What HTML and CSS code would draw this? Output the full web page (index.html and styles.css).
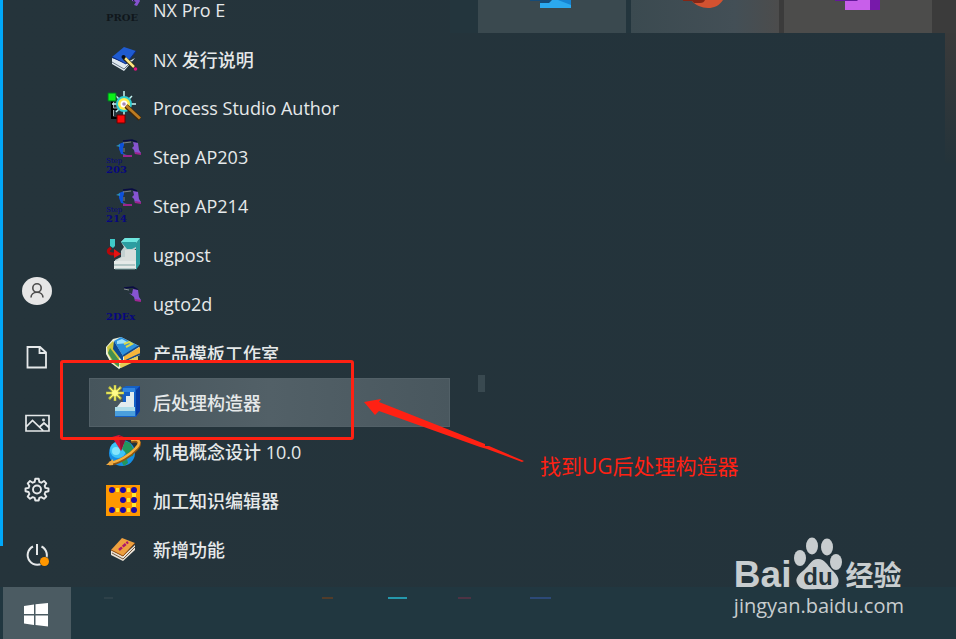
FILE: index.html
```html
<!DOCTYPE html>
<html lang="zh-cmn-Hans">
<head>
    <meta charset="UTF-8">

    <title>开始菜单</title>

    <link rel="stylesheet" href="styles.css">
</head>
<body>
    <div id="start-menu">
        <div class="edge"></div>
        <nav class="rail">
            <button type="button" aria-label="用户">
                <svg width="30" height="30" viewBox="0 0 30 30">
                    <ellipse cx="15" cy="15" rx="15" ry="14" fill="#e6e6e6"/>
                    <g fill="none" stroke="#4c4c4c" stroke-width="1.6">
                        <circle cx="15" cy="12" r="4.2"/>
                        <path d="M9 21.500c0-3 2.500-5.300 6-5.300s6 2.300 6 5.300"/>
                    </g>
                </svg>
            </button>
            <button type="button" aria-label="文档">
                <svg width="30" height="30" viewBox="0 0 30 30" fill="none" stroke="#e6e9ea" stroke-width="1.800">
                    <path d="M5.500 5h12.500l6 5.500v15h-18.500zM17.500 5v6h6.500"/>
                </svg>
            </button>
            <button type="button" aria-label="图片">
                <svg width="30" height="30" viewBox="0 0 30 30" fill="none" stroke="#e6e9ea" stroke-width="1.700">
                    <path d="M4 7.500h23v15.500h-23zM4.500 18.500l6-6 10.500 10M17.500 19l4.500-4 5 4.500"/>
                    <circle cx="21.500" cy="12" r=".6"/>
                </svg>
            </button>
            <button type="button" aria-label="设置">
                <svg width="30" height="30" viewBox="0 0 30 30" fill="none" stroke="#e6e9ea" stroke-width="1.900">
                    <path stroke-linejoin="round" d="M13.300 4.800h3.400l.6 3 2 .9 2.700-1.700 2.300 2.300-1.700 2.600.8 2 3.100.6v2.800l-3.100.7-.8 2 1.700 2.500-2.300 2.300-2.700-1.700-2 .8-.6 2.600h-3.400l-.6-2.600-2-.8-2.700 1.700-2.300-2.300 1.700-2.500-.8-2-3.100-.7v-2.800l3.100-.6.8-2-1.700-2.600 2.300-2.300 2.700 1.700 2-.9z"/>
                    <circle cx="15" cy="15.500" r="4"/>
                </svg>
            </button>
            <button type="button" aria-label="电源">
                <svg width="30" height="30" viewBox="0 0 30 30">
                    <path fill="none" stroke="#e6e9ea" stroke-width="2" d="M15 4v11M11 6.500a9.600 9.600 0 1 0 8.500 0"/>
                    <circle cx="22.500" cy="21.500" r="5" fill="#24333a"/>
                    <circle cx="22.500" cy="21.500" r="4.500" fill="#ff9700"/>
                </svg>
            </button>
        </nav>
        <ul class="apps">
            <li><a href="#">
                <svg viewBox="0 0 36 36">
                    <path d="M27 5h6l2 4-3 5-3-1 2-3-4-1z" fill="#8552cf"/><path d="M28 6l2 4-2-1z" fill="#291947"/>
                    <text class="tag dark" x="1" y="29">PROE</text>
                </svg>
                <span>NX Pro E</span>
            </a></li>
            <li><a href="#">
                <svg viewBox="0 0 36 36">
                    <path d="M7 17v6l12 7 11-13-9 5z" fill="#dfe8ef"/>
                    <path d="M7 21l12 7 8-8" fill="none" stroke="#6b7987"/>
                    <path d="M19 6l12 4-10 13-14-7z" fill="#1f5bd0"/>
                    <path d="M7 16l14 7 10-13" fill="none" stroke="#0b2a85"/>
                    <path d="M19 17l10 9" stroke="#2a2415" stroke-width="4"/><path d="M20 17l9 9" stroke="#ffe680" stroke-width="2.500"/>
                    <circle cx="18.500" cy="16" r="2" fill="#090d18"/><circle cx="30.500" cy="28" r="1.800" fill="#e3117e"/>
                </svg>
                <span>NX 发行说明</span>
            </a></li>
            <li><a href="#">
                <svg viewBox="0 0 36 36">
                    <path d="M7 11v17h6M7 19h6" fill="none" stroke="#000" stroke-width="2"/>
                    <path d="M8.500 12v6h5M8.500 20v6" fill="none" stroke="#a4b0b5"/>
                    <path d="M19 1v26M7 14h24M11 6l16 16M27 6L11 22" stroke="#c7f5f4" stroke-width="1.500"/>
                    <circle cx="19" cy="14" r="8" fill="#2fcdd1"/><circle cx="19" cy="14" r="6" fill="#ffed4d"/>
                    <circle cx="19" cy="14" r="3.500" fill="#fff"/><circle cx="19" cy="14" r="1.800" fill="#a689b4"/>
                    <path d="M21 16l14 13" stroke="#40270b" stroke-width="4.500"/><path d="M21 15.500l14 13" stroke="#bd7c22" stroke-width="2.800"/>
                    <path d="M3 3h8v8H3z" fill="#0bf019" stroke="#072"/><path d="M12 25h8v8h-8z" fill="#fb0909" stroke="#600"/>
                </svg>
                <span>Process Studio Author</span>
            </a></li>
            <li><a href="#">
                <svg viewBox="0 0 36 36">
                    <path d="M14 5l5-2v3l-1 3v5l3 2-5-1-2-5z" fill="#0d51db"/><path d="M11 7l4-2v3z" fill="#2889b9"/>
                    <path d="M18 2l9-1 5 2" fill="none" stroke="#090c45" stroke-width="1.500"/>
                    <path d="M18 4l8-1M18 16l9 1M19 9v4" fill="none" stroke="#7b8088"/>
                    <path d="M28 3l5 1 1 7 2 3-6 1-1-4-2-2 2-2z" fill="#8654d1"/>
                    <path d="M18 17h9M30 14l6 1" stroke="#9c248e" stroke-width="2"/>
                    <text class="tag small" x="1" y="24">Step</text><text class="tag" x="1" y="34">203</text>
                </svg>
                <span>Step AP203</span>
            </a></li>
            <li><a href="#">
                <svg viewBox="0 0 36 36">
                    <path d="M14 5l5-2v3l-1 3v5l3 2-5-1-2-5z" fill="#0d51db"/><path d="M11 7l4-2v3z" fill="#2889b9"/>
                    <path d="M18 2l9-1 5 2" fill="none" stroke="#090c45" stroke-width="1.500"/>
                    <path d="M18 4l8-1M18 16l9 1M19 9v4" fill="none" stroke="#7b8088"/>
                    <path d="M28 3l5 1 1 7 2 3-6 1-1-4-2-2 2-2z" fill="#8654d1"/>
                    <path d="M18 17h9M30 14l6 1" stroke="#9c248e" stroke-width="2"/>
                    <text class="tag small" x="1" y="24">Step</text><text class="tag" x="1" y="34">214</text>
                </svg>
                <span>Step AP214</span>
            </a></li>
            <li><a href="#">
                <svg viewBox="0 0 36 36">
                    <path d="M16 5l4-4h15l-3 5v5l-4 3v5l4 4v9H10v-9l6-3v-6l3-4z" fill="#c3d1d1"/>
                    <path d="M16 5l4-4h15l-4 5z" fill="#6de6df"/><path d="M16 5h15v5l-4 2h-5z" fill="#2c9da1"/>
                    <path d="M31 6l4-5v26l-4 6z" fill="#2a9a9c"/>
                    <path d="M20 13h11v11H12l5-4h3z" fill="#d9dfdd"/><path d="M9 24h22v8H9z" fill="#e4e9e7"/>
                    <path d="M9 28h21M10 32h20" stroke="#7fa2a2"/>
                    <path d="M5 2h5v7l-2 2-3-2z" fill="#3fcac9"/>
                    <path d="M6 11c-4 2-4 6 3 6" fill="none" stroke="#b80609" stroke-width="3"/><path d="M9 12l7 5-7 4z" fill="#e61313"/>
                </svg>
                <span>ugpost</span>
            </a></li>
            <li><a href="#">
                <svg viewBox="0 0 36 36">
                    <path d="M19 2l9-1 5 3" fill="none" stroke="#0a0c42" stroke-width="1.500"/><path d="M19 3l5 1" stroke="#8c9094"/>
                    <path d="M28 3l5 1 1 7 2 3-6 1-1-4-5-4 3 1z" fill="#8654d1"/><path d="M30 14l6 1" stroke="#a02693" stroke-width="2"/>
                    <text class="tag" x="1" y="34">2DEx</text>
                </svg>
                <span>ugto2d</span>
            </a></li>
            <li><a href="#">
                <svg viewBox="0 0 36 36">
                    <path d="M1 12l7-8 8-2 18 9 1 9-9 5-12 9-8-6-5-9z" fill="#edf1dd"/>
                    <path d="M2 12l6-6 7 14-2 12-5-4-5-9z" fill="#cfc73d"/><path d="M3 18l7 11 4 3v-7L5 13z" fill="#438f50"/>
                    <path d="M9 6l7-4 18 9-16 10z" fill="#2c91de"/><path d="M9 6l9 15v6L8 14z" fill="#0c4a95"/>
                    <path d="M12 6l5-2 7 4-12 1z" fill="#9de1fa"/><path d="M19 9l5-2 3 2-6 3" fill="none" stroke="#d9d84a" stroke-width="2"/>
                    <path d="M19 21l16-9v7l-16 7z" fill="#f5b53b"/><path d="M18 27l17-8M18 21l16-10" stroke="#174884" stroke-width="1.500"/>
                    <path d="M14 29l19-8v4l-17 8z" fill="#e5cc55"/>
                </svg>
                <span>产品模板工作室</span>
            </a></li>
            <li class="current"><a href="#">
                <svg viewBox="0 0 36 36">
                    <path d="M17 4l4-2h14v25l-4 6H10v-8l8-6z" fill="#1560c6"/><path d="M31 6l4-4v25l-4 5z" fill="#0939a0"/>
                    <path d="M18 4h12v4H18z" fill="#3286df"/>
                    <path d="M21 12h4V8h4v15H12l4-5h5z" fill="#e3ecee"/><path d="M10 23h20v8H10z" fill="#aedce9"/>
                    <path d="M10 27h20v5H10z" fill="#4b9fdd"/>
                    <path d="M10 1v16M1 9h18M4 3l12 12M16 3L4 15" stroke="#c8c942" stroke-width="2.500"/>
                    <path d="M10 2v14M2 9h16M5 4l10 10M15 4L5 14" stroke="#fff97a"/><circle cx="10" cy="9" r="3" fill="#fffb8b"/>
                </svg>
                <span>后处理构造器</span>
            </a></li>
            <li><a href="#">
                <svg viewBox="0 0 36 36">
                    <circle cx="17" cy="20" r="13" fill="#168ee4"/><circle cx="13" cy="17" r="8" fill="#3dc3f7"/><circle cx="11" cy="18" r="4" fill="#83e5fd"/>
                    <path d="M20 8l5 2 4 7-1 6-5 1-3-5-3-3zM16 28l6-2 1 4-4 3z" fill="#23965c"/>
                    <path d="M26 8c9-2 10 3 5 8C25 23 13 30 4 31" fill="none" stroke="#915613" stroke-width="4"/>
                    <path d="M26 7c9-2 10 3 5 8C25 22 13 29 4 30" fill="none" stroke="#f5b13f" stroke-width="2.500"/>
                    <path d="M1 32l7-6v6z" fill="#eeaa44"/>
                    <path d="M7 4l7-2 7 3-5 13z" fill="#d91535"/><path d="M16 18L14 3l7 2z" fill="#8d1232"/>
                </svg>
                <span>机电概念设计 10.0</span>
            </a></li>
            <li><a href="#">
                <svg viewBox="0 0 36 36">
                    <path d="M1 3h34v31H1z" fill="#ff9800"/>
                    <path d="M11 8h3M22 8h3M22 18h3M11 28h3M22 28h3M27 13h4M27 23h4" stroke="#ffe82b" stroke-width="4"/>
                    <g fill="#1c0ca9"><circle cx="7" cy="8" r="3"/><circle cx="18" cy="8" r="3"/><circle cx="29" cy="8" r="3"/><circle cx="18" cy="18" r="3"/><circle cx="29" cy="18" r="3"/><circle cx="7" cy="28" r="3"/><circle cx="18" cy="28" r="3"/><circle cx="29" cy="28" r="3"/></g>
                </svg>
                <span>加工知识编辑器</span>
            </a></li>
            <li><a href="#">
                <svg viewBox="0 0 36 36">
                    <path d="M6 19l12 6 12-11v5L18 30 6 24z" fill="#e9e2d6"/><path d="M7 22l11 6 12-12" fill="none" stroke="#775c42"/>
                    <path d="M17 7l13 5-12 13-12-6z" fill="#eea03f"/><path d="M6 19l12 6 12-13" fill="none" stroke="#9b4f12"/>
                    <path d="M14 19l9-8" stroke="#ad176c" stroke-width="2.500" stroke-dasharray="4 1"/>
                </svg>
                <span>新增功能</span>
            </a></li>
        </ul>
        <div class="tiles">
            <a class="tile" href="#" aria-label="Mail">
                <svg width="44" height="11" viewBox="0 0 44 11">
                    <path d="M10 0h31v8H10z" fill="#2ba9ef"/><path d="M28 0h13v5z" fill="#1684d2"/><path d="M0 0h22l-3 3h-9v-2H0z" fill="#164b77"/>
                </svg>
            </a>
            <a class="tile mid" href="#" aria-label="PowerPoint">
                <svg width="44" height="11" viewBox="0 0 44 11">
                    <path d="M7 0h33c-4 6-9 8-15 8S12 5 9 1z" fill="#d35230"/><path d="M0 0h22c-1 2-2 3-5 3h-6L9 1H0z" fill="#842615"/>
                </svg>
            </a>
            <a class="tile warm" href="#" aria-label="OneNote">
                <svg width="46" height="11" viewBox="0 0 46 11">
                    <path d="M10 0h25v10H10z" fill="#c85fea"/><path d="M35 0h10v10H35z" fill="#7719aa"/><path d="M0 0h23l-1 1H0z" fill="#63189a"/>
                </svg>
            </a>
        </div>
        <div class="scroll-thumb"></div>
    </div>
    <div id="taskbar">
        <button type="button" class="start" aria-label="开始">
            <svg width="24" height="24" viewBox="0 0 24 24" fill="#fff">
                <path d="M0 3l10-1.500v9.500H0zM11.500 1.300L24 0v11H11.500zM0 12.500h10v9.500L0 20.500zM11.500 12.500H24V23.500l-12.500-1.500z"/>
            </svg>
        </button>
        <svg class="task-lines" width="490" height="2" viewBox="0 0 490 2">
            <path d="M33 1h9" stroke="#3d4d53" stroke-width="1"/>
            <path d="M251 1h11" stroke="#824214" stroke-width="1"/>
            <path d="M317 1h19" stroke="#27bad0" stroke-width="1.500"/>
            <path d="M387 1h13" stroke="#7d3049" stroke-width="1"/>
            <path d="M459 1h21" stroke="#31508a" stroke-width="1.500"/>
        </svg>
    </div>

    <!-- 标注 -->
    <div class="mark-box"></div>
    <svg class="mark-arrow" width="162" height="64" viewBox="0 0 162 64">
        <path d="M1 4L18 1L16 4L122 46V48L126 48L161 63L159 64L124 51L117 49L16 13L12 17z" fill="#ff2113"/>
    </svg>
    <p class="mark-text">找到UG后处理构造器</p>

    <div class="watermark">
        <div class="brand">
            <span class="bai">Bai</span>
            <svg width="50" height="54" viewBox="0 0 50 54" fill="#c8cdcf">
                <ellipse cx="7" cy="21" rx="6" ry="8"/><ellipse cx="19" cy="9" rx="6" ry="8.500"/>
                <ellipse cx="34" cy="10" rx="6" ry="8.500"/><ellipse cx="43" cy="25" rx="6" ry="8"/>
                <path d="M25 22c7 0 9 6 14 11s8 9 6 14c-3 7-11 5-20 5S9 54 5 48s0-10 6-15 7-11 14-11z"/>
                <text class="du" x="25" y="48" text-anchor="middle">du</text>
            </svg>
            <span class="jy">经验</span>
        </div>
        <div class="site">jingyan.baidu.com</div>
    </div>
</body>
</html>
```

FILE: styles.css
```css
html,body{
    width: 100%;
    height: 100%;
    margin: 0;
}
body{
    position: relative;
    display: flex;
    flex-direction: column;
    overflow: hidden;
    color: #e6e9ea;
    background-color: #24333a;
    font-family: "Open Sans", "Noto Sans CJK SC", sans-serif;
    font-size: 18px;
}
button{
    padding: 0;
    border: 0;
    background: none;
}
svg{
    display: block;
}
#start-menu{
    position: relative;
    display: flex;
    flex: 1;
    min-height: 0;
    overflow: hidden;
    background-image: linear-gradient(90deg,#25343b,#23333b);
}
.edge{
    width: 3px;
    margin-bottom: 41px;
    background-color: #00a8f9;
}
.rail{
    display: flex;
    flex-direction: column;
    justify-content: flex-end;
    align-items: center;
    gap: 36px;
    width: 68px;
    padding-bottom: 17px;
}
.apps{
    display: flex;
    flex-direction: column;
    justify-content: flex-end;
    width: 361px;
    margin: 0 0 0 18px;
    padding: 0 0 13px;
    list-style: none;
}
.apps a{
    display: flex;
    align-items: center;
    gap: 12px;
    box-sizing: border-box;
    height: 49px;
    padding: 0 0 2px 16px;
    color: #e6e9ea;
    font-weight: 500;
    text-decoration: none;
    white-space: nowrap;
}
.apps svg{
    width: 36px;
    height: 36px;
}
.apps .current{
    background-image: linear-gradient(90deg,#46555c,#526067 50%,#49575e);
    box-shadow: inset 0 0 0 1px #526067;
}
.tag{
    fill: #07077f;
    font-family: "DejaVu Serif", serif;
    font-size: 10px;
    font-weight: bold;
}
.tag.dark{
    fill: #10171b;
}
.tag.small{
    font-size: 7px;
    font-weight: normal;
}

.tiles{
    display: flex;
    flex: 1;
    gap: 5px;
    height: 33px;
    padding: 0 24px 0 28px;
    background-image: linear-gradient(90deg,#23353d 45%,#3b3b3b 65%);
}
/* 右侧壁纸透出的灰边 */
.tiles::after{
    position: absolute;
    top: 33px;
    right: 0;
    width: 11px;
    height: 130px;
    background-image: linear-gradient(#3a3a3a,#24333a);
    content: "";
}
.tile{
    display: flex;
    flex: 1;
    justify-content: center;
    background-color: #3a494f;
}
.tile.mid{
    background-image: linear-gradient(90deg,#3b4a50,#434f56 70%,#4c4c4c);
}
.tile.warm{
    background-color: #4c4c4b;
}
.scroll-thumb{
    position: absolute;
    top: 375px;
    left: 478px;
    width: 7px;
    height: 17px;
    background-color: #394950;
}

#taskbar{
    display: flex;
    height: 52px;
    padding-left: 3px;
    background-color: #213740;
}
.start{
    display: flex;
    justify-content: center;
    align-items: center;
    box-sizing: border-box;
    width: 68px;
    padding: 3px 3px 0 0;
    background-color: #4b5b62;
}
.task-lines{
    margin-top: 10px;
}

.mark-box{
    position: absolute;
    top: 360px;
    left: 60px;
    box-sizing: border-box;
    width: 294px;
    height: 80px;
    border: 3px solid #ff2113;
    border-radius: 3px;
}
.mark-arrow{
    position: absolute;
    top: 398px;
    left: 363px;
}
.mark-text{
    position: absolute;
    top: 451px;
    left: 540px;
    margin: 0;
    color: #ff2113;
    font-size: 21px;
    line-height: 30px;
    white-space: nowrap;
}

.watermark{
    position: absolute;
    right: 52px;
    bottom: 21px;
    color: #c8cdcf;
}
.brand{
    display: flex;
    align-items: flex-end;
    gap: 2px;
    margin-bottom: 3px;
}
.bai{
    font-family: "Liberation Sans", sans-serif;
    font-size: 37px;
    font-weight: bold;
    line-height: 32px;
}
.du{
    fill: #24333a;
    font-family: "Liberation Sans", sans-serif;
    font-size: 24px;
    font-weight: bold;
}
.jy{
    font-size: 28px;
    font-weight: bold;
    line-height: 32px;
}
.site{
    font-size: 20px;
    line-height: 24px;
}
```
